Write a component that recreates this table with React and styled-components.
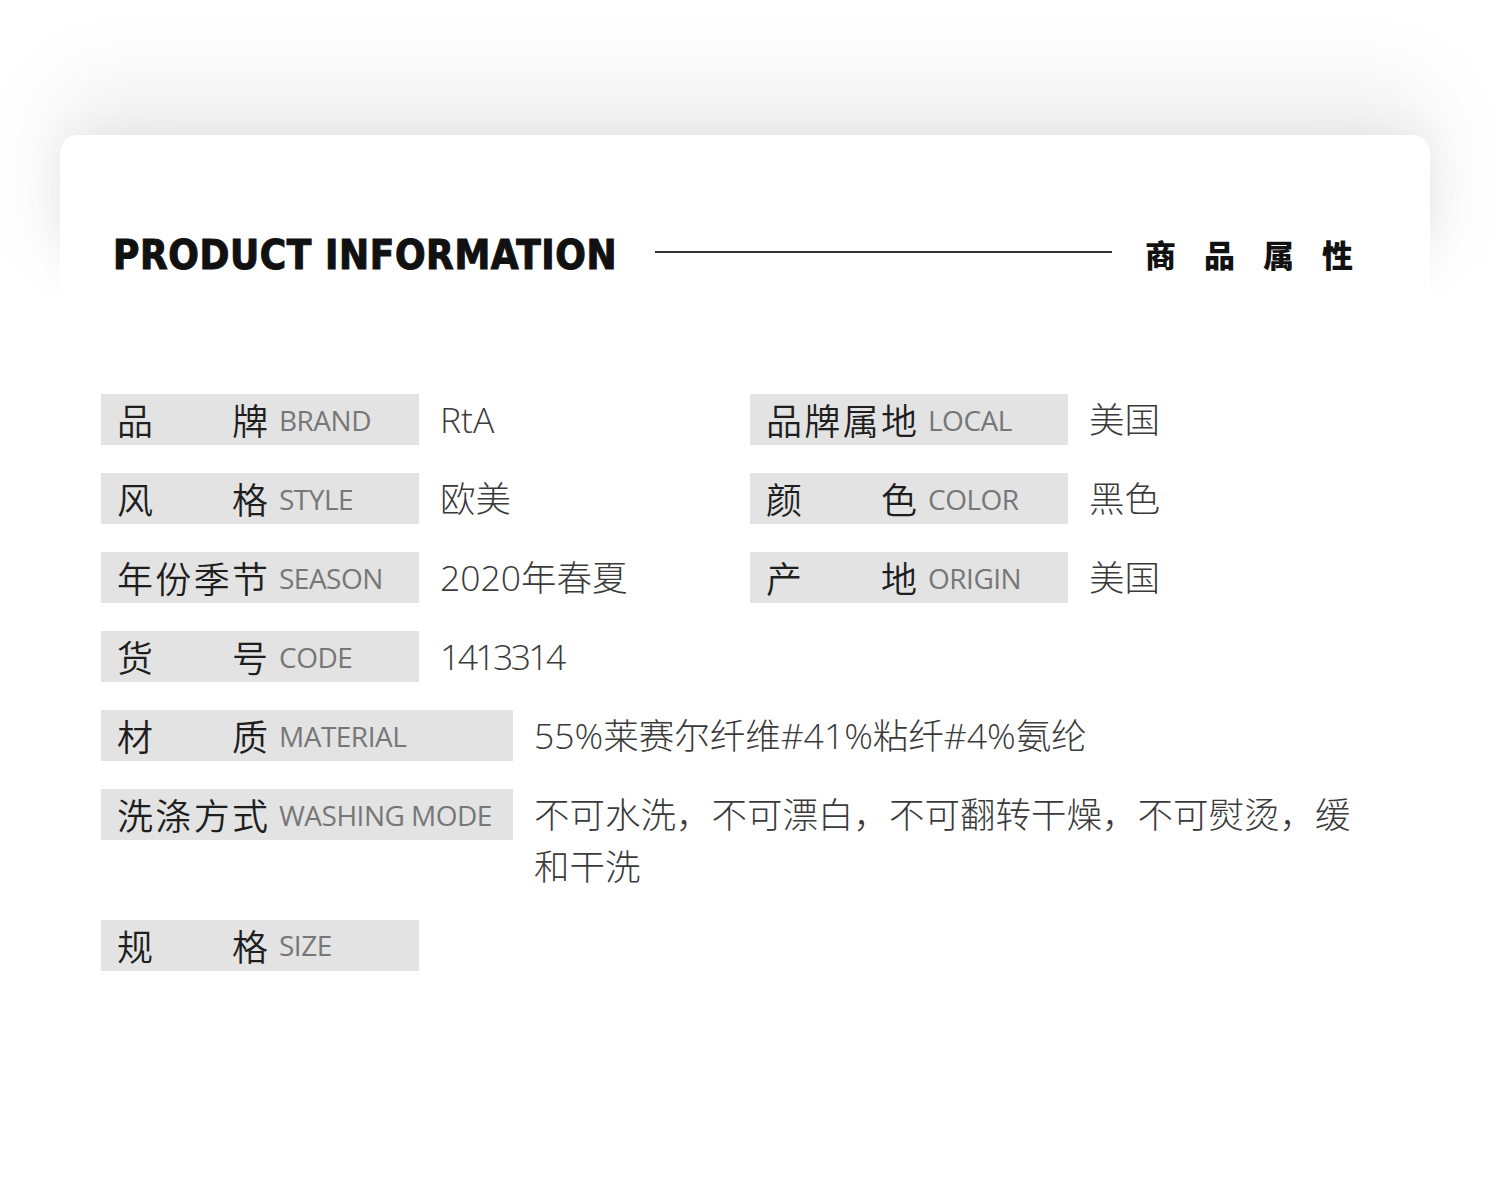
import React from 'react';
import styled, { createGlobalStyle } from 'styled-components';

const Global = createGlobalStyle`
    body{margin:0;background:#fff;}
    *{box-sizing:border-box;}
`;

const Page = styled.div`
    width:1500px;min-height:1184px;padding-top:135px;background:#fff;overflow:hidden;
`;

const HeaderCard = styled.div`
    margin:0 70px 0 60px;height:175px;padding:100px 0 0 53px;background:#fff;
    border-radius:18px 18px 0 0;
    box-shadow:0 -50px 90px rgba(0,0,0,0.07), 0 0 40px rgba(0,0,0,0.06);
    display:flex;align-items:flex-start;
    & > *{position:relative;z-index:2;}
`;

const Title = styled.h1`
    margin:0;width:502px;white-space:nowrap;
    font-family:"DejaVu Sans Condensed","DejaVu Sans",sans-serif;font-stretch:condensed;
    font-size:40px;font-weight:700;line-height:40px;color:#111;
    -webkit-text-stroke:1px #111;letter-spacing:0.6px;
`;

const Rule = styled.div`
    width:457px;height:2px;background:#333;margin:16px 33px 0 40px;
`;

const CnTitle = styled.div`
    font-family:"Noto Sans CJK SC",sans-serif;font-weight:900;font-size:31px;line-height:34px;
    letter-spacing:28px;color:#111;margin-top:2px;
`;

const Content = styled.div`
    position:relative;z-index:1;margin-top:-90px;
    background:linear-gradient(rgba(255,255,255,0), #fff 85px);
    padding:174px 0 0 101px;display:flex;flex-direction:column;gap:27.5px;
`;

const Row = styled.div`
    display:grid;grid-template-columns:${p => p.$two ? '649px 1fr' : '1fr'};
`;

const Pair = styled.div`
    display:flex;align-items:flex-start;
`;

const Label = styled.div`
    flex:none;display:flex;align-items:center;height:51px;
    width:${p => p.$wide ? 412 : 318}px;padding-left:16px;background:#e3e3e3;
`;

const Cn = styled.span`
    display:flex;justify-content:space-between;width:151px;
    font-family:"Noto Sans CJK SC",sans-serif;font-weight:350;font-size:36px;line-height:51px;color:#1e1e1e;
`;

const En = styled.span`
    margin-left:11px;font-family:"Open Sans",sans-serif;font-size:28px;color:#777;
    letter-spacing:-0.5px;white-space:nowrap;
`;

const Value = styled.div`
    margin-left:21px;max-width:840px;
    font-family:"Open Sans","Noto Sans CJK SC",sans-serif;font-weight:300;font-size:35.5px;
    line-height:51.5px;color:#3a3a3a;letter-spacing:${p => p.$num ? '-2.6px' : '0'};
`;

const Field = ({ cn, en, value, wide, num }) => (
    <Pair>
        <Label $wide={wide}>
            <Cn>{cn.split('').map((c, i) => <span key={i}>{c}</span>)}</Cn>
            <En>{en}</En>
        </Label>
        {value && <Value $num={num}>{value}</Value>}
    </Pair>
);

const App = () => {
    return (
        <Page>
            <Global />
            <HeaderCard>
                <Title>PRODUCT INFORMATION</Title>
                <Rule />
                <CnTitle>商品属性</CnTitle>
            </HeaderCard>
            <Content>
                <Row $two>
                    <Field cn="品牌" en="BRAND" value="RtA" />
                    <Field cn="品牌属地" en="LOCAL" value="美国" />
                </Row>
                <Row $two>
                    <Field cn="风格" en="STYLE" value="欧美" />
                    <Field cn="颜色" en="COLOR" value="黑色" />
                </Row>
                <Row $two>
                    <Field cn="年份季节" en="SEASON" value="2020年春夏" />
                    <Field cn="产地" en="ORIGIN" value="美国" />
                </Row>
                <Row>
                    <Field cn="货号" en="CODE" value="1413314" num />
                </Row>
                <Row>
                    <Field wide cn="材质" en="MATERIAL" value="55%莱赛尔纤维#41%粘纤#4%氨纶" />
                </Row>
                <Row>
                    <Field wide cn="洗涤方式" en="WASHING MODE" value="不可水洗，不可漂白，不可翻转干燥，不可熨烫，缓和干洗" />
                </Row>
                <Row>
                    <Field cn="规格" en="SIZE" />
                </Row>
            </Content>
        </Page>
    );
};

export default App;
